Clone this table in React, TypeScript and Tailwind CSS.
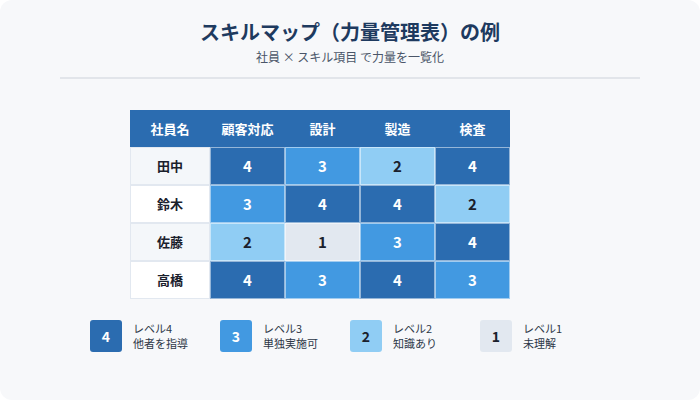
import React from "react";

const colors: Record<number, string> = {
  4: "bg-[#2b6cb0] text-white",
  3: "bg-[#4299e1] text-white",
  2: "bg-[#90cdf4] text-[#1a202c]",
  1: "bg-[#e2e8f0] text-[#1a202c]",
};

const rows: { name: string; vals: number[] }[] = [
  { name: "田中", vals: [4, 3, 2, 4] },
  { name: "鈴木", vals: [3, 4, 4, 2] },
  { name: "佐藤", vals: [2, 1, 3, 4] },
  { name: "高橋", vals: [4, 3, 4, 3] },
];

const headers = ["顧客対応", "設計", "製造", "検査"];

const legend = [
  { lv: 4, desc: "他者を指導" },
  { lv: 3, desc: "単独実施可" },
  { lv: 2, desc: "知識あり" },
  { lv: 1, desc: "未理解" },
];

export default function App() {
  return (
    <div
      className="w-[700px] h-[400px] bg-white"
      style={{ fontFamily: '"Noto Sans CJK JP", "Noto Sans", sans-serif' }}
    >
      <div className="w-full h-full rounded-xl bg-[#f7f8fa] flex flex-col">
        <div className="pt-[17px] text-center">
          <div className="text-[20px] leading-[30px] font-bold text-[#1e3a5f]">
            スキルマップ（力量管理表）の例
          </div>
          <div className="text-[12px] leading-[18px] text-[#4a5568] mt-[1px]">
            社員 × スキル項目 で力量を一覧化
          </div>
        </div>
        <div className="mx-[60px] mt-[11px] h-[2px] bg-[#e2e5ea]" />
        <div className="ml-[130px] mt-[31px] w-[380px]">
          <div className="flex h-[37px] bg-[#2b6cb0] text-white text-[13px] font-bold">
            <div className="w-[80px] flex items-center justify-center">社員名</div>
            {headers.map((h) => (
              <div key={h} className="w-[75px] flex items-center justify-center">
                {h}
              </div>
            ))}
          </div>
          {rows.map((r, i) => (
            <div key={r.name} className="flex h-[38px]">
              <div
                className={`w-[80px] flex items-center justify-center border border-[#e2e8f0] text-[13px] font-bold text-[#1a202c] ${
                  i % 2 === 0 ? "bg-[#f4f7fa]" : "bg-white"
                }`}
              >
                {r.name}
              </div>
              {r.vals.map((v, j) => (
                <div
                  key={j}
                  className={`w-[75px] flex items-center justify-center border border-white/50 text-[15px] font-bold ${colors[v]}`}
                >
                  {v}
                </div>
              ))}
            </div>
          ))}
        </div>
        <div className="ml-[90px] mt-[21px] flex">
          {legend.map((l) => (
            <div key={l.lv} className="w-[130px] flex items-center">
              <div
                className={`w-[32px] h-[32px] rounded-[3px] flex items-center justify-center text-[14px] font-bold ${colors[l.lv]}`}
              >
                {l.lv}
              </div>
              <div className="ml-[11px] text-[11px] leading-[15px] text-[#2d3748]">
                <div>レベル{l.lv}</div>
                <div>{l.desc}</div>
              </div>
            </div>
          ))}
        </div>
      </div>
    </div>
  );
}
